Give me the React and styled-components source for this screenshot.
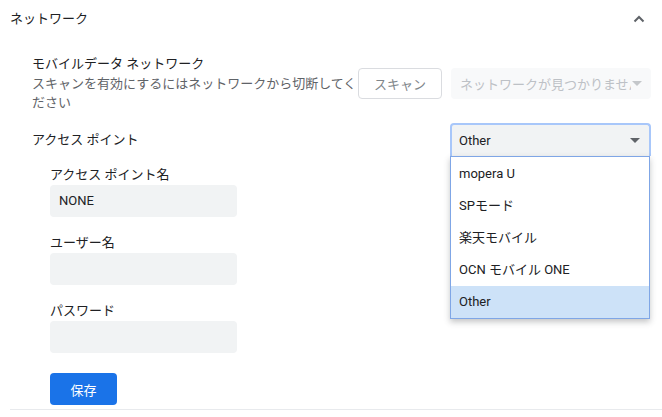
import React, { useState } from "react";
import styled, { createGlobalStyle } from "styled-components";

const GlobalStyle = createGlobalStyle`
  body {
    margin: 0;
    background: #fff;
    font-family: Roboto, "Noto Sans CJK JP", sans-serif;
    font-size: 13px;
    color: #202124;
  }
`;

const apnOptions = ["mopera U", "SPモード", "楽天モバイル", "OCN モバイル ONE", "Other"];

const ChevronUp = () => (
  <svg width="12" height="8" viewBox="0 0 12 8">
    <polyline points="1.5,6.5 6,2 10.5,6.5" fill="none" stroke="#5f6368" strokeWidth="2" />
  </svg>
);

const Caret = ({ color }) => (
  <svg width="10" height="5" viewBox="0 0 10 5" style={{ flexShrink: 0 }}>
    <polygon points="0,0 10,0 5,5" fill={color} />
  </svg>
);

const App = () => {
  const [selected, setSelected] = useState("Other");

  return (
    <>
      <GlobalStyle />
      <Page>
        <SectionHeader>
          <HeaderTitle>ネットワーク</HeaderTitle>
          <ChevronUp />
        </SectionHeader>

        <Content>
          <MobileRow>
            <TextColumn>
              <Title>モバイルデータ ネットワーク</Title>
              <Subtitle>スキャンを有効にするにはネットワークから切断してください</Subtitle>
            </TextColumn>
            <ScanButton>スキャン</ScanButton>
            <SelectBox disabled>
              <SelectText clip>ネットワークが見つかりません</SelectText>
              <Caret color="#c4c7ca" />
            </SelectBox>
          </MobileRow>

          <ApnRow>
            <Title>アクセス ポイント</Title>
            <SelectWrap>
              <SelectBox open>
                <SelectText>{selected}</SelectText>
                <Caret color="#5f6368" />
              </SelectBox>
              <Menu>
                {apnOptions.map((opt) => (
                  <MenuItem
                    key={opt}
                    active={opt === selected}
                    onClick={() => setSelected(opt)}
                  >
                    {opt}
                  </MenuItem>
                ))}
              </Menu>
            </SelectWrap>
          </ApnRow>

          <Fields>
            <Field>
              <Label>アクセス ポイント名</Label>
              <Input>NONE</Input>
            </Field>
            <Field>
              <Label>ユーザー名</Label>
              <Input />
            </Field>
            <Field>
              <Label>パスワード</Label>
              <Input />
            </Field>
            <SaveButton>保存</SaveButton>
          </Fields>
        </Content>
        <Divider />
      </Page>
    </>
  );
};

const Page = styled.div`
  width: 662px;
  height: 417px;
  overflow: hidden;
`;

const SectionHeader = styled.div`
  height: 38px;
  display: flex;
  align-items: center;
  justify-content: space-between;
  padding: 0 17px 0 10px;
`;

const HeaderTitle = styled.div`
  font-size: 13px;
  line-height: 20px;
`;

const Content = styled.div`
  padding: 0 11px 0 32px;
`;

const MobileRow = styled.div`
  display: flex;
  align-items: center;
  padding-top: 16px;
`;

const TextColumn = styled.div`
  flex: 1;
  min-width: 0;
`;

const Title = styled.div`
  line-height: 20px;
`;

const Subtitle = styled.div`
  line-height: 19px;
  color: #5f6368;
`;

const ScanButton = styled.button`
  width: 84px;
  height: 31px;
  margin-right: 9px;
  background: #fff;
  border: 1px solid #dadce0;
  border-radius: 4px;
  font-family: inherit;
  font-size: 13px;
  color: #80868b;
  padding: 0;
`;

const SelectWrap = styled.div`
  position: relative;
  width: 201px;
`;

const SelectBox = styled.div`
  box-sizing: border-box;
  width: ${(p) => (p.open ? "201px" : "200px")};
  height: ${(p) => (p.open ? "33px" : "31px")};
  display: flex;
  align-items: center;
  justify-content: space-between;
  padding: 0 9px 0 ${(p) => (p.open ? "7px" : "9px")};
  border-radius: ${(p) => (p.open ? "4px 4px 0 0" : "4px")};
  background: ${(p) => (p.disabled ? "#f8f9fa" : "#f1f3f4")};
  color: ${(p) => (p.disabled ? "#bdc1c6" : "#202124")};
  border: ${(p) => (p.open ? "2px solid #a8c7fa" : "none")};
  border-bottom: none;
`;

const SelectText = styled.span`
  white-space: nowrap;
  overflow: hidden;
  text-overflow: ${(p) => (p.clip ? "clip" : "ellipsis")};
  min-width: 0;
  flex: 1;
  margin-right: 1px;
`;

const ApnRow = styled.div`
  display: flex;
  align-items: center;
  justify-content: space-between;
  margin-top: 11px;
`;

const Menu = styled.div`
  position: absolute;
  top: 33px;
  left: 0;
  width: 200px;
  box-sizing: border-box;
  padding-top: 1px;
  background: #fff;
  border: 1px solid #7fa6e6;
  box-shadow: 0 3px 6px rgba(60, 64, 67, 0.3);
  z-index: 2;
`;

const MenuItem = styled.div`
  height: 32px;
  line-height: 32px;
  padding-left: 8px;
  background: ${(p) => (p.active ? "#cde2f8" : "#fff")};
  color: #202124;
  cursor: default;
`;

const Fields = styled.div`
  padding-left: 18px;
  margin-top: 9px;
`;

const Field = styled.div`
  margin-bottom: 16px;
`;

const Label = styled.div`
  line-height: 20px;
`;

const Input = styled.div`
  box-sizing: border-box;
  width: 187px;
  height: 32px;
  line-height: 32px;
  padding-left: 9px;
  background: #f1f3f4;
  border-radius: 4px;
`;

const SaveButton = styled.button`
  width: 67px;
  height: 32px;
  margin-top: 4px;
  padding: 0;
  border: none;
  border-radius: 4px;
  background: #1a73e8;
  color: #fff;
  font-family: inherit;
  font-size: 13px;
`;

const Divider = styled.div`
  margin: 4px 0 0 10px;
  border-top: 1px solid #e8eaed;
`;

export default App;
